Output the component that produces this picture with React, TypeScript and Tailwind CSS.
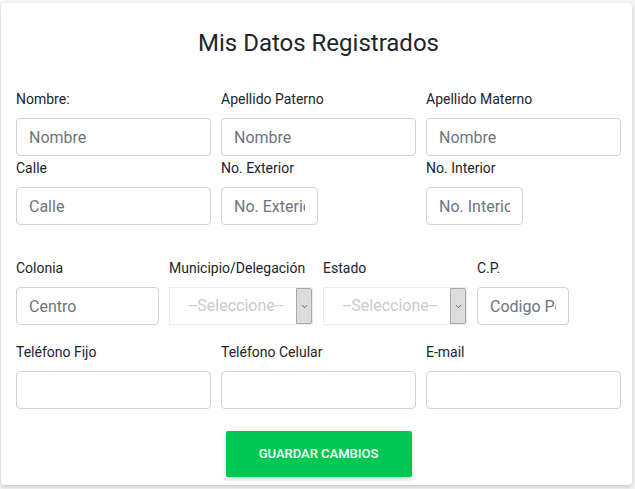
import { ChevronDown } from "lucide-react";

function Field({
	label,
	placeholder,
	width,
	inputWidth,
}: {
	label: string;
	placeholder?: string;
	width: string;
	inputWidth?: string;
}) {
	return (
		<div className={`flex flex-col shrink-0 ${width}`}>
			<label className="text-[14px] leading-[21px] text-[#212529] mb-[8px] whitespace-nowrap">
				{label}
			</label>
			<input
				placeholder={placeholder}
				className={`h-[38px] ${inputWidth ?? "w-full"} rounded-[4px] border border-[#ced4da] bg-white px-[12px] text-[16px] text-[#495057] placeholder:text-[#6c757d] outline-none`}
			/>
		</div>
	);
}

function SelectField({ label }: { label: string }) {
	return (
		<div className="flex flex-col shrink-0 w-[144px]">
			<label className="text-[14px] leading-[21px] text-[#212529] mb-[8px] whitespace-nowrap">
				{label}
			</label>
			<div className="h-[38px] w-full flex border border-[#ececec] bg-white">
				<div className="flex-1 flex items-center justify-center text-[16px] text-[#cbcbcb] pl-[6px]">
					--Seleccione--
				</div>
				<div className="w-[16px] h-full bg-[#dcdcdc] border border-[#a9a9a9] rounded-r-[2px] flex items-center justify-center">
					<ChevronDown className="w-[9px] h-[9px] text-[#444]" strokeWidth={2} />
				</div>
			</div>
		</div>
	);
}

export default function App() {
	return (
		<div
			className="w-[635px] h-[489px] bg-[#f4f4f4] pt-[3px] pl-[1px]"
			style={{ fontFamily: "Roboto, 'Liberation Sans', sans-serif" }}>
			<div className="w-[631px] h-[482px] bg-white rounded-[4px] shadow-[0_2px_4px_rgba(0,0,0,0.18)] pl-[15px] pr-[11px] pt-[26px]">
				<h1 className="text-center text-[24px] leading-[29px] text-[#212529] mb-[31px]">
					Mis Datos Registrados
				</h1>

				{/* Row 1 */}
				<div className="flex gap-[10px]">
					<Field label="Nombre:" placeholder="Nombre" width="w-[195px]" />
					<Field label="Apellido Paterno" placeholder="Nombre" width="w-[195px]" />
					<Field label="Apellido Materno" placeholder="Nombre" width="w-[195px]" />
				</div>

				{/* Row 2 */}
				<div className="flex gap-[10px] mt-[2px]">
					<Field label="Calle" placeholder="Calle" width="w-[195px]" />
					<Field
						label="No. Exterior"
						placeholder="No. Exterior"
						width="w-[195px]"
						inputWidth="w-[97px]"
					/>
					<Field
						label="No. Interior"
						placeholder="No. Interior"
						width="w-[195px]"
						inputWidth="w-[97px]"
					/>
				</div>

				{/* Row 3 */}
				<div className="flex gap-[10px] mt-[33px]">
					<Field label="Colonia" placeholder="Centro" width="w-[143px]" />
					<SelectField label="Municipio/Delegación" />
					<SelectField label="Estado" />
					<Field
						label="C.P."
						placeholder="Codigo Postal"
						width="w-[143px]"
						inputWidth="w-[92px]"
					/>
				</div>

				{/* Row 4 */}
				<div className="flex gap-[10px] mt-[17px]">
					<Field label="Teléfono Fijo" width="w-[195px]" />
					<Field label="Teléfono Celular" width="w-[195px]" />
					<Field label="E-mail" width="w-[195px]" />
				</div>

				<div className="flex justify-center mt-[22px]">
					<button className="w-[186px] h-[46px] bg-[#00c853] rounded-[2px] text-white text-[13px] font-medium shadow-[0_2px_4px_rgba(0,0,0,0.2)]">
						GUARDAR CAMBIOS
					</button>
				</div>
			</div>
		</div>
	);
}
